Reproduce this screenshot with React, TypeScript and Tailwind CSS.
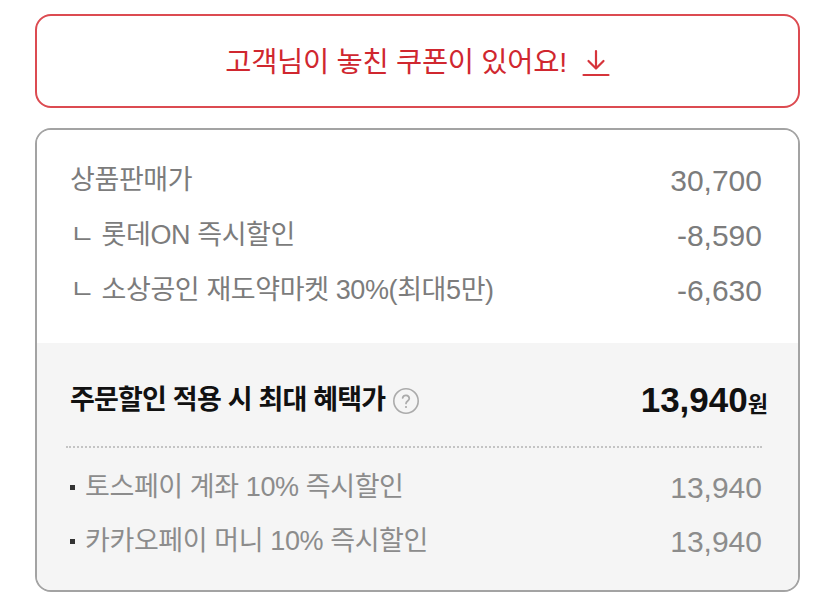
import React from "react";

const font = { fontFamily: '"Liberation Sans", "Noto Sans CJK KR", sans-serif' };

type Row = { label: string; value: string };

const priceRows: Row[] = [
  { label: "상품판매가", value: "30,700" },
  { label: "ㄴ 롯데ON 즉시할인", value: "-8,590" },
  { label: "ㄴ 소상공인 재도약마켓 30%(최대5만)", value: "-6,630" },
];

const payRows: Row[] = [
  { label: "토스페이 계좌 10% 즉시할인", value: "13,940" },
  { label: "카카오페이 머니 10% 즉시할인", value: "13,940" },
];

const DownloadIcon = () => (
  <svg width="28" height="30" viewBox="0 0 28 30" fill="none" stroke="#d6343b" strokeWidth="2.2" strokeLinecap="round" strokeLinejoin="round">
    <path d="M14 3v17" />
    <path d="M6.5 13l7.5 7.5 7.5-7.5" />
    <path d="M1.5 27h25" />
  </svg>
);

const HelpIcon = () => (
  <svg width="28" height="28" viewBox="0 0 28 28" fill="none">
    <circle cx="14" cy="14" r="12.2" stroke="#ababab" strokeWidth="1.6" />
    <path d="M10.6 11a3.4 3.4 0 0 1 6.7.6c0 2.2-3.3 2.6-3.3 4.8" stroke="#ababab" strokeWidth="1.7" strokeLinecap="round" fill="none" />
    <circle cx="14" cy="20" r="1.1" fill="#ababab" />
  </svg>
);

export default function App() {
  return (
    <div className="w-[835px] h-[604px] bg-white pt-[14px] px-[35px]" style={font}>
      <div className="h-[94px] rounded-[16px] border-2 border-[#dc4b51] flex items-center justify-center gap-[15px] pt-[3px]">
        <span className="text-[28.5px] text-[#d0272f] tracking-[-0.3px]">고객님이 놓친 쿠폰이 있어요!</span>
        <DownloadIcon />
      </div>

      <div className="mt-[20px] h-[464px] rounded-[16px] border-2 border-[#a3a3a3] overflow-hidden flex flex-col">
        <div className="bg-white pt-[23px] pb-[25px] pl-[33px] pr-[36px]">
          {priceRows.map((r) => (
            <div key={r.label} className="h-[55px] flex items-center justify-between text-[27px] text-[#7c7c7c]">
              <span className="tracking-[-0.4px]">{r.label}</span>
              <span className="text-[30px]">{r.value}</span>
            </div>
          ))}
        </div>
        <div className="flex-1 bg-[#f5f5f5] pt-[30px] pl-[33px] pr-[30px]">
          <div className="h-[55px] flex items-center justify-between">
            <div className="flex items-center gap-[7px]">
              <span className="text-[27px] font-bold text-[#111] tracking-[-0.8px]">주문할인 적용 시 최대 혜택가</span>
              <HelpIcon />
            </div>
            <div className="flex items-baseline">
              <span className="text-[35px] font-bold text-[#111]">13,940</span>
              <span className="text-[22px] font-bold text-[#111]">원</span>
            </div>
          </div>
          <div className="mt-[18px] ml-[-4px] mr-[6px] border-t-2 border-dotted border-[#c4c4c4]" />
          <div className="mt-[12px] pr-[6px]">
            {payRows.map((r) => (
              <div key={r.label} className="h-[54px] flex items-center justify-between text-[27px] text-[#8c8c8c]">
                <span className="flex items-center tracking-[-0.4px]">
                  <span className="inline-block w-[5px] h-[5px] bg-[#333] mr-[10px]" />
                  {r.label}
                </span>
                <span className="text-[30px]">{r.value}</span>
              </div>
            ))}
          </div>
        </div>
      </div>
    </div>
  );
}
